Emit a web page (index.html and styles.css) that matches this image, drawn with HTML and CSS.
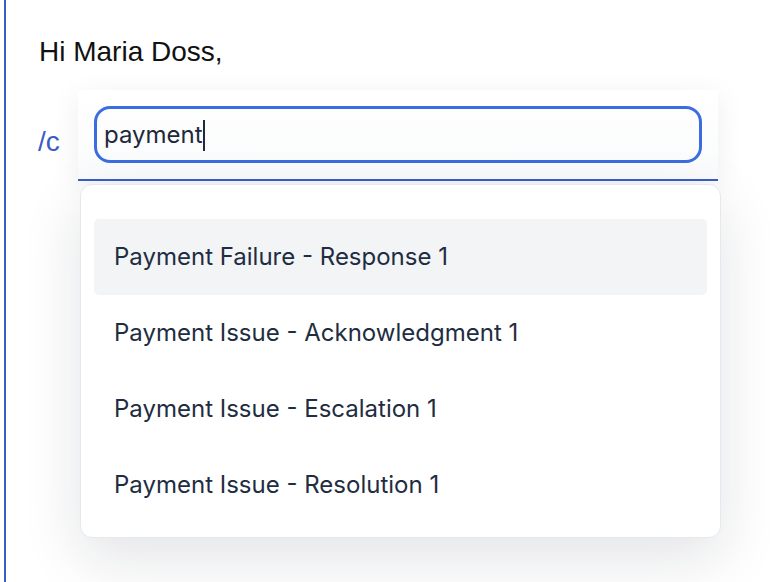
FILE: index.html
```html
<!DOCTYPE html>
<html>
<head>
<meta charset="utf-8">
<link rel="stylesheet" href="styles.css">
</head>
<body>
<div class="editor">
  <p class="greeting">Hi Maria Doss,</p>
  <p class="slash">/c</p>

  <div class="popover">
    <div class="search">
      <div class="input"><span class="value">payment</span><span class="caret"></span></div>
    </div>
    <ul class="list">
      <li class="item active">Payment Failure - Response 1</li>
      <li class="item">Payment Issue - Acknowledgment 1</li>
      <li class="item">Payment Issue - Escalation 1</li>
      <li class="item">Payment Issue - Resolution 1</li>
    </ul>
  </div>
</div>
</body>
</html>
```

FILE: styles.css
```css
html, body {
  margin: 0;
  padding: 0;
  background: #ffffff;
  height: 100%;
  overflow: hidden;
}

.editor {
  position: relative;
  margin-left: 4px;
  height: 100%;
  border-left: 2px solid #3a5cc5;
  padding: 32px 0 0 33px;
  box-sizing: border-box;
  font-family: "Liberation Sans", Arial, sans-serif;
  font-size: 28px;
  line-height: 40px;
}

.greeting {
  margin: 0;
  color: #111111;
}

.slash {
  margin: 50px 0 0 -1px;
  color: #3a5cc5;
}

.popover {
  position: absolute;
  left: 72px;
  top: 90px;
  width: 643px;
  font-family: Inter, "Noto Sans", sans-serif;
}

.search {
  width: 640px;
  box-sizing: border-box;
  padding: 16px;
  background: linear-gradient(#ffffff, #fafbfc);
  border-bottom: 2px solid #3a5cc5;
  box-shadow: 0 6px 30px rgba(15, 23, 42, 0.07);
}

.input {
  height: 57px;
  box-sizing: border-box;
  border: 3px solid #3b6de0;
  border-radius: 16px;
  display: flex;
  align-items: center;
  padding: 1px 0 0 7px;
  font-size: 24px;
  color: #1e293b;
  background: transparent;
}

.value {
  line-height: 30px;
}

.caret {
  display: inline-block;
  width: 2px;
  height: 31px;
  background: #1e293b;
}

.list {
  list-style: none;
  margin: 3px 0 0 2px;
  padding: 34px 13px 14px;
  width: 641px;
  box-sizing: border-box;
  background: #ffffff;
  border: 1px solid #e6e8ec;
  border-radius: 12px;
  box-shadow: 0 20px 60px rgba(15, 23, 42, 0.12);
}

.item {
  height: 76px;
  display: flex;
  align-items: center;
  padding-left: 20px;
  border-radius: 5px;
  font-size: 24px;
  color: #1f2d42;
}

.item.active {
  background: #f3f4f6;
}
```
